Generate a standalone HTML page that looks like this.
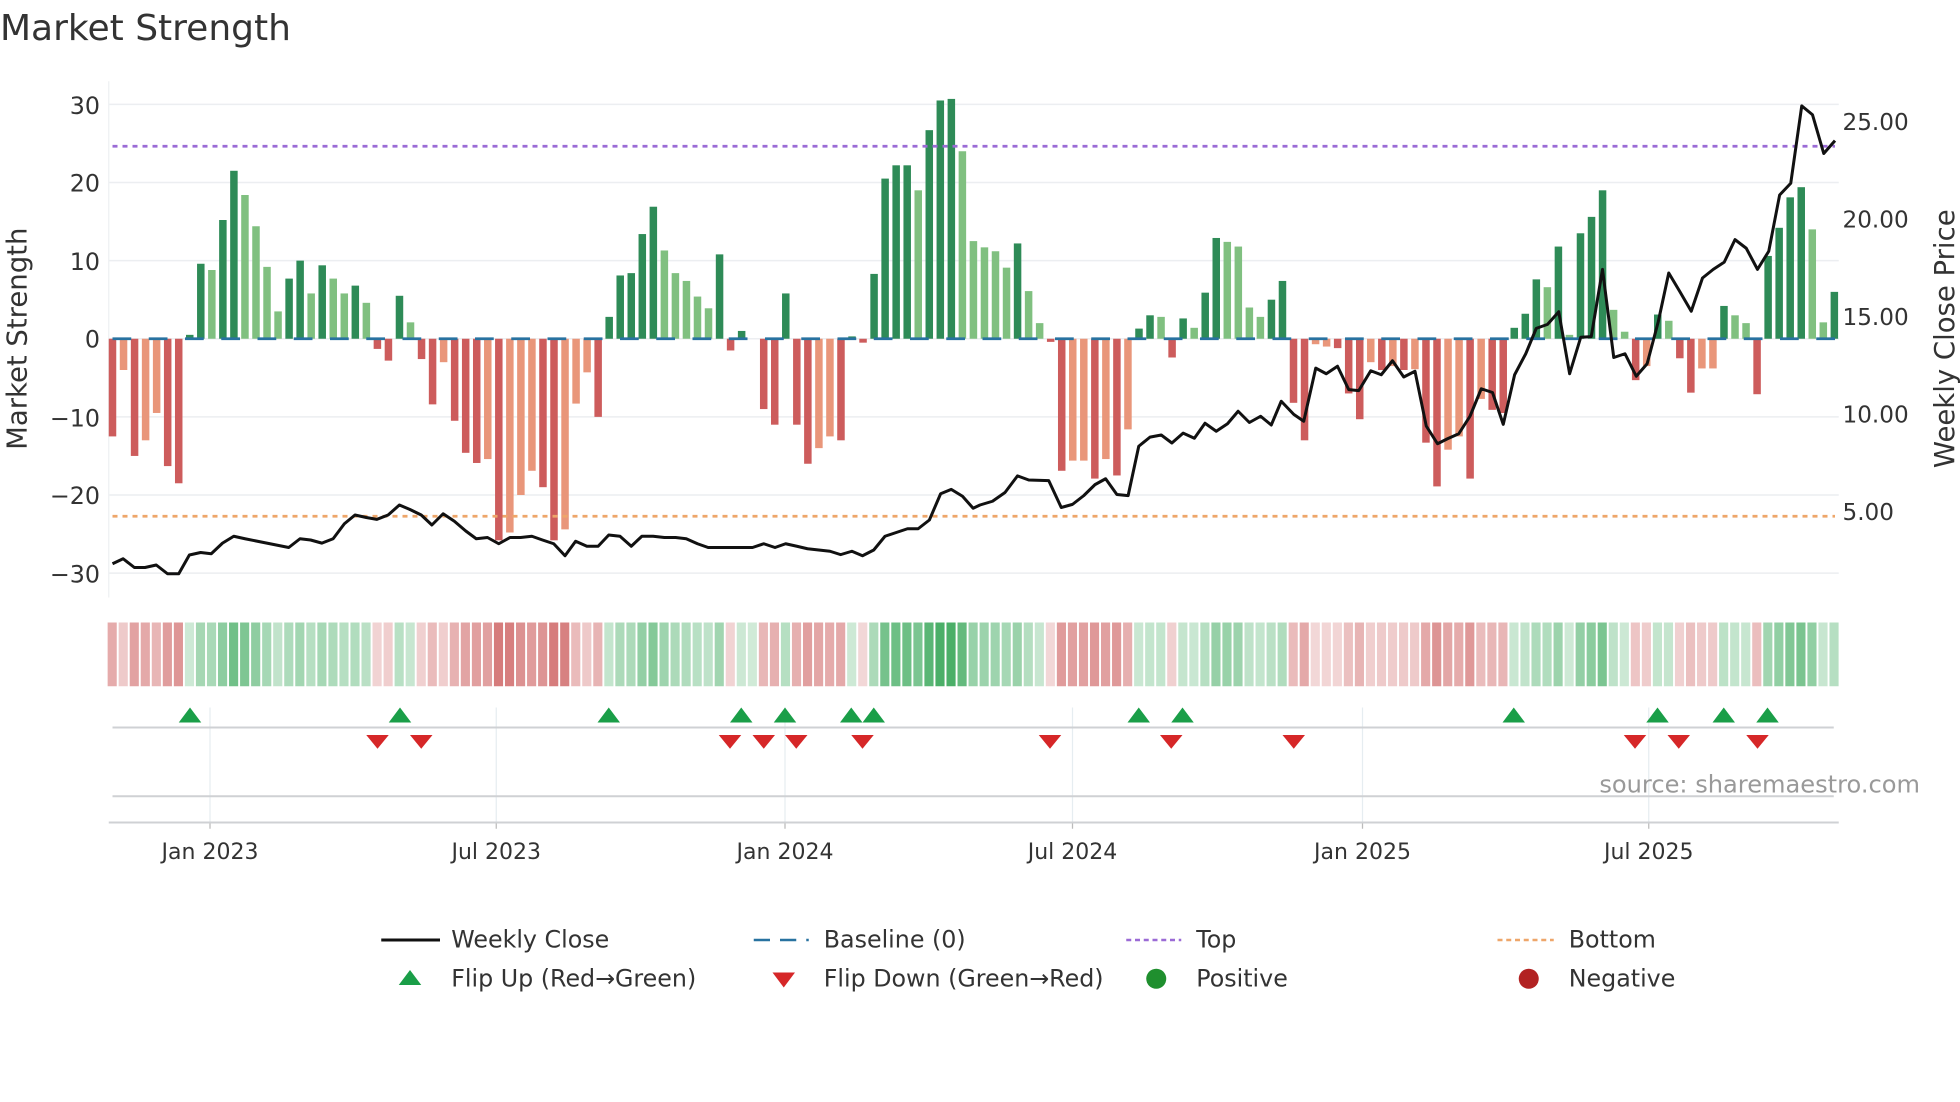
<!DOCTYPE html>
<html><head><meta charset="utf-8"><style>
html,body{margin:0;padding:0;background:#fff;}
svg{display:block;font-family:"DejaVu Sans","Liberation Sans",sans-serif;}
</style></head><body>
<svg id="s" width="1960" height="1102" viewBox="0 0 1568 881.6" xmlns="http://www.w3.org/2000/svg">
<rect width="1568" height="881.6" fill="#fff"/>
<text x="0" y="32" font-size="28.8" fill="#333">Market Strength</text>
<g id="grid" stroke="#eceef1" stroke-width="1.2"></g>
<line x1="87" y1="65" x2="87" y2="478" stroke="#eef0f2" stroke-width="1"/>
<g id="bars"></g>
<g id="base"></g>
<line x1="90" y1="117" x2="1468" y2="117" stroke="#9b6bd6" stroke-width="2.2" stroke-dasharray="4,4"/>
<line x1="90" y1="413" x2="1468" y2="413" stroke="#eea66a" stroke-width="2.2" stroke-dasharray="4,4"/>
<polyline id="price" fill="none" stroke="#111" stroke-width="2.4" stroke-linejoin="round"/>
<g font-size="19" fill="#333" text-anchor="end">
<text x="80" y="91">30</text><text x="80" y="153">20</text><text x="80" y="216">10</text><text x="80" y="278">0</text>
<text x="80" y="341">−10</text><text x="80" y="403">−20</text><text x="80" y="466">−30</text>
</g>
<g font-size="18.5" fill="#333">
<text x="1474" y="104">25.00</text><text x="1474" y="182">20.00</text><text x="1474" y="260">15.00</text>
<text x="1474" y="338">10.00</text><text x="1474" y="416">5.00</text>
</g>
<text transform="translate(21,271) rotate(-90)" font-size="22" fill="#333" text-anchor="middle">Market Strength</text>
<text transform="translate(1563,271) rotate(-90)" font-size="22" fill="#333" text-anchor="middle">Weekly Close Price</text>
<g id="heat"></g>
<g id="vgrid" stroke="#e6edf1" stroke-width="1"></g>
<line x1="90" y1="582" x2="1467" y2="582" stroke="#cfd1d4" stroke-width="1.6"/>
<line x1="90" y1="637" x2="1467" y2="637" stroke="#cfd1d4" stroke-width="1.6"/>
<line x1="87" y1="658" x2="1471" y2="658" stroke="#cfd1d4" stroke-width="1.6"/>
<g id="tri"></g>
<text x="1536" y="634" font-size="19.3" fill="#999" text-anchor="end">source: sharemaestro.com</text>
<g font-size="17.6" fill="#333" text-anchor="middle">
<text x="168" y="687">Jan 2023</text><text x="397" y="687">Jul 2023</text><text x="628" y="687">Jan 2024</text>
<text x="858" y="687">Jul 2024</text><text x="1090" y="687">Jan 2025</text><text x="1319" y="687">Jul 2025</text>
</g>
<g font-size="19" fill="#333">
<line x1="305" y1="752" x2="352" y2="752" stroke="#111" stroke-width="2.4"/>
<text x="361" y="758">Weekly Close</text>
<line x1="603" y1="752" x2="647" y2="752" stroke="#2872a0" stroke-width="2" stroke-dasharray="13,8"/>
<text x="659" y="758">Baseline (0)</text>
<line x1="901" y1="752" x2="945" y2="752" stroke="#9b6bd6" stroke-width="2" stroke-dasharray="4,3"/>
<text x="957" y="758">Top</text>
<line x1="1198" y1="752" x2="1243" y2="752" stroke="#eea66a" stroke-width="2" stroke-dasharray="4,3"/>
<text x="1255" y="758">Bottom</text>
<polygon points="319,788 337,788 328,776" fill="#1a9e48"/>
<text x="361" y="789">Flip Up (Red→Green)</text>
<polygon points="618,778 636,778 627,790" fill="#d62728"/>
<text x="659" y="789">Flip Down (Green→Red)</text>
<circle cx="925" cy="783" r="8" fill="#1f8f2e"/>
<text x="957" y="789">Positive</text>
<circle cx="1223" cy="783" r="8" fill="#b22222"/>
<text x="1255" y="789">Negative</text>
</g>
</svg>
<script>
(function(){
var NS="http://www.w3.org/2000/svg";
function el(t,a,p){var e=document.createElementNS(NS,t);for(var k in a)e.setAttribute(k,a[k]);document.getElementById(p).appendChild(e);return e;}
var raw="-12.5d -4l -15d -13l -9.5l -16.3d -18.5d 0.5d 9.6d 8.8l 15.2d 21.5d 18.4l 14.4l 9.2l 3.5l 7.7d 10d 5.8l 9.4d 7.7l 5.8l 6.8d 4.6l -1.3d -2.8d 5.5d 2.1l -2.6d -8.4d -3l -10.5d -14.6d -15.9d -15.4l -25.8d -24.8l -20l -16.9l -19d -25.8d -24.4l -8.3l -4.3l -10d 2.8d 8.1d 8.4d 13.4d 16.9d 11.3l 8.4l 7.4l 5.4l 3.9l 10.8d -1.5d 1d 0d -9d -11d 5.8d -11d -16d -14l -12.5l -13d 0.3d -0.5d 8.3d 20.5d 22.2d 22.2d 19l 26.7d 30.5d 30.7d 24l 12.5l 11.7l 11.2l 9.1l 12.2d 6.1l 2l -0.4d -16.9d -15.6l -15.6l -17.9d -15.4l -17.5d -11.6l 1.3d 3d 2.8l -2.4d 2.6d 1.4l 5.9d 12.9d 12.4l 11.8l 4l 2.8l 5d 7.4d -8.2d -13d -0.7l -1.0l -1.2d -7d -10.3d -3l -4d -3.5l -4d -3.9l -13.3d -18.9d -14.2l -12.5l -17.9d -7.7l -9.1d -9.5d 1.4d 3.2d 7.6d 6.6l 11.8d 0.5l 13.5d 15.6d 19d 3.7l 0.9l -5.3d -3.5l 3.1d 2.3l -2.5d -6.9d -3.8l -3.8l 4.2d 3l 2l -7.1d 10.6d 14.2d 18.1d 19.4d 14l 2.1l 6d".split(" ");
var Z=271,K=6.25,dx=8.83;
[30,20,10,0,-10,-20,-30].forEach(function(v){el("line",{x1:87,x2:1471,y1:Z-v*K,y2:Z-v*K},"grid");});
raw.forEach(function(s,i){
 var v=parseFloat(s),d=s.slice(-1)=="d",x=90+dx*i;
 var c=v>=0?(d?"#2e8b57":"#80c080"):(d?"#cd5c5c":"#e9967a");
 if(Math.abs(v)>0.05){var y=v>=0?Z-v*K:Z,h=Math.abs(v)*K;el("rect",{x:x-3,y:y,width:6,height:h,fill:c},"bars");}
 var a=0.22+0.62*Math.min(Math.abs(v),30)/30;
 var hc=v>=0?"rgba(40,160,75,"+a.toFixed(2)+")":"rgba(200,80,80,"+a.toFixed(2)+")";
 el("rect",{x:x-3.9,y:498,width:7.3,height:51,fill:hc},"heat");
});
el("line",{x1:90,x2:1468,y1:Z,y2:Z,stroke:"#2872a0","stroke-width":2.2,"stroke-dasharray":"15,14"},"base");
[168,397,628,858,1090,1319].forEach(function(x){el("line",{x1:x,x2:x,y1:566,y2:658},"vgrid");el("line",{x1:x,x2:x,y1:658,y2:663,stroke:"#bbb"},"vgrid");});
[152,320,487,593,628,681,699,911,946,1211,1326,1379,1414].forEach(function(x){el("polygon",{points:(x-9)+",578 "+(x+9)+",578 "+x+",566",fill:"#1a9e48"},"tri");});
[302,337,584,611,637,690,840,937,1035,1308,1343,1406].forEach(function(x){el("polygon",{points:(x-9)+",588 "+(x+9)+",588 "+x+",599",fill:"#d62728"},"tri");});
var p="90,451 98.5,447 107.5,454 116,454 125,452 134,459 143,459 151.5,444 160.5,442 169,443 178,434.5 187,429 196,431 231,438 240,431 248.5,432 257.5,434.5 266.5,431 275.5,419 284,412 293,414 301.5,415.5 310.5,412 319.5,404 328,407.6 337,412 345.5,420 354.5,411 363.5,417 372.5,424.7 381,431 390,430 399,435 408,430 416.5,430 425.5,429 434,432 443,435 452,444.6 460.5,433 469.5,437 478.5,437 487,428 496,429 505,437 513.5,429 522.5,429 531.5,430 540.5,430 549,431 558,435 566.5,438 575.5,438 602,438 611,435 620,438 628.5,435 637.5,437 646,439 664,441 672.5,443.7 681.5,441 690,444.6 699,440 708,429 717,426 726,423 734.5,423 743.5,416 752.5,395 761,391.5 770,397 778.5,406.6 784,404 794,401 804,394 814,380.7 823,384 839,384.5 849,406 858,403.5 867,396.5 876,387.7 884.5,383 893.5,395.6 902.5,396.5 911,357 920,349.7 929,348 937.5,354.4 946.5,346.5 955.5,350.6 964,338.6 973,345 982,339 990.5,329 999.5,338 1008.5,333 1017,340 1025,321 1035,331.5 1043,337 1052.6,294.5 1061,299 1070,293 1079,311.7 1087,312.5 1096.6,296.6 1105,299.8 1114,288.6 1123,301.6 1132,297 1141,340.8 1150,355 1158,351 1167,347 1176,333 1185,311 1194,314 1202.6,339.5 1211.7,299.8 1220.6,283 1229,262.7 1238,259.5 1247,249.4 1255.7,299 1264.6,269.8 1273,269.3 1282,215.5 1291,286 1300,283 1309,301 1317.7,291 1326.6,257.4 1335,218.4 1344,233.5 1353,249 1362,222.4 1370.6,215.5 1379.4,209.7 1388,191.7 1397,198.6 1406,215.5 1415,201 1423.7,156 1432.6,146.6 1441.4,84.7 1450,91.8 1459,122.8 1468,112.5";
document.getElementById("price").setAttribute("points",p);
})();
</script>
</body></html>
